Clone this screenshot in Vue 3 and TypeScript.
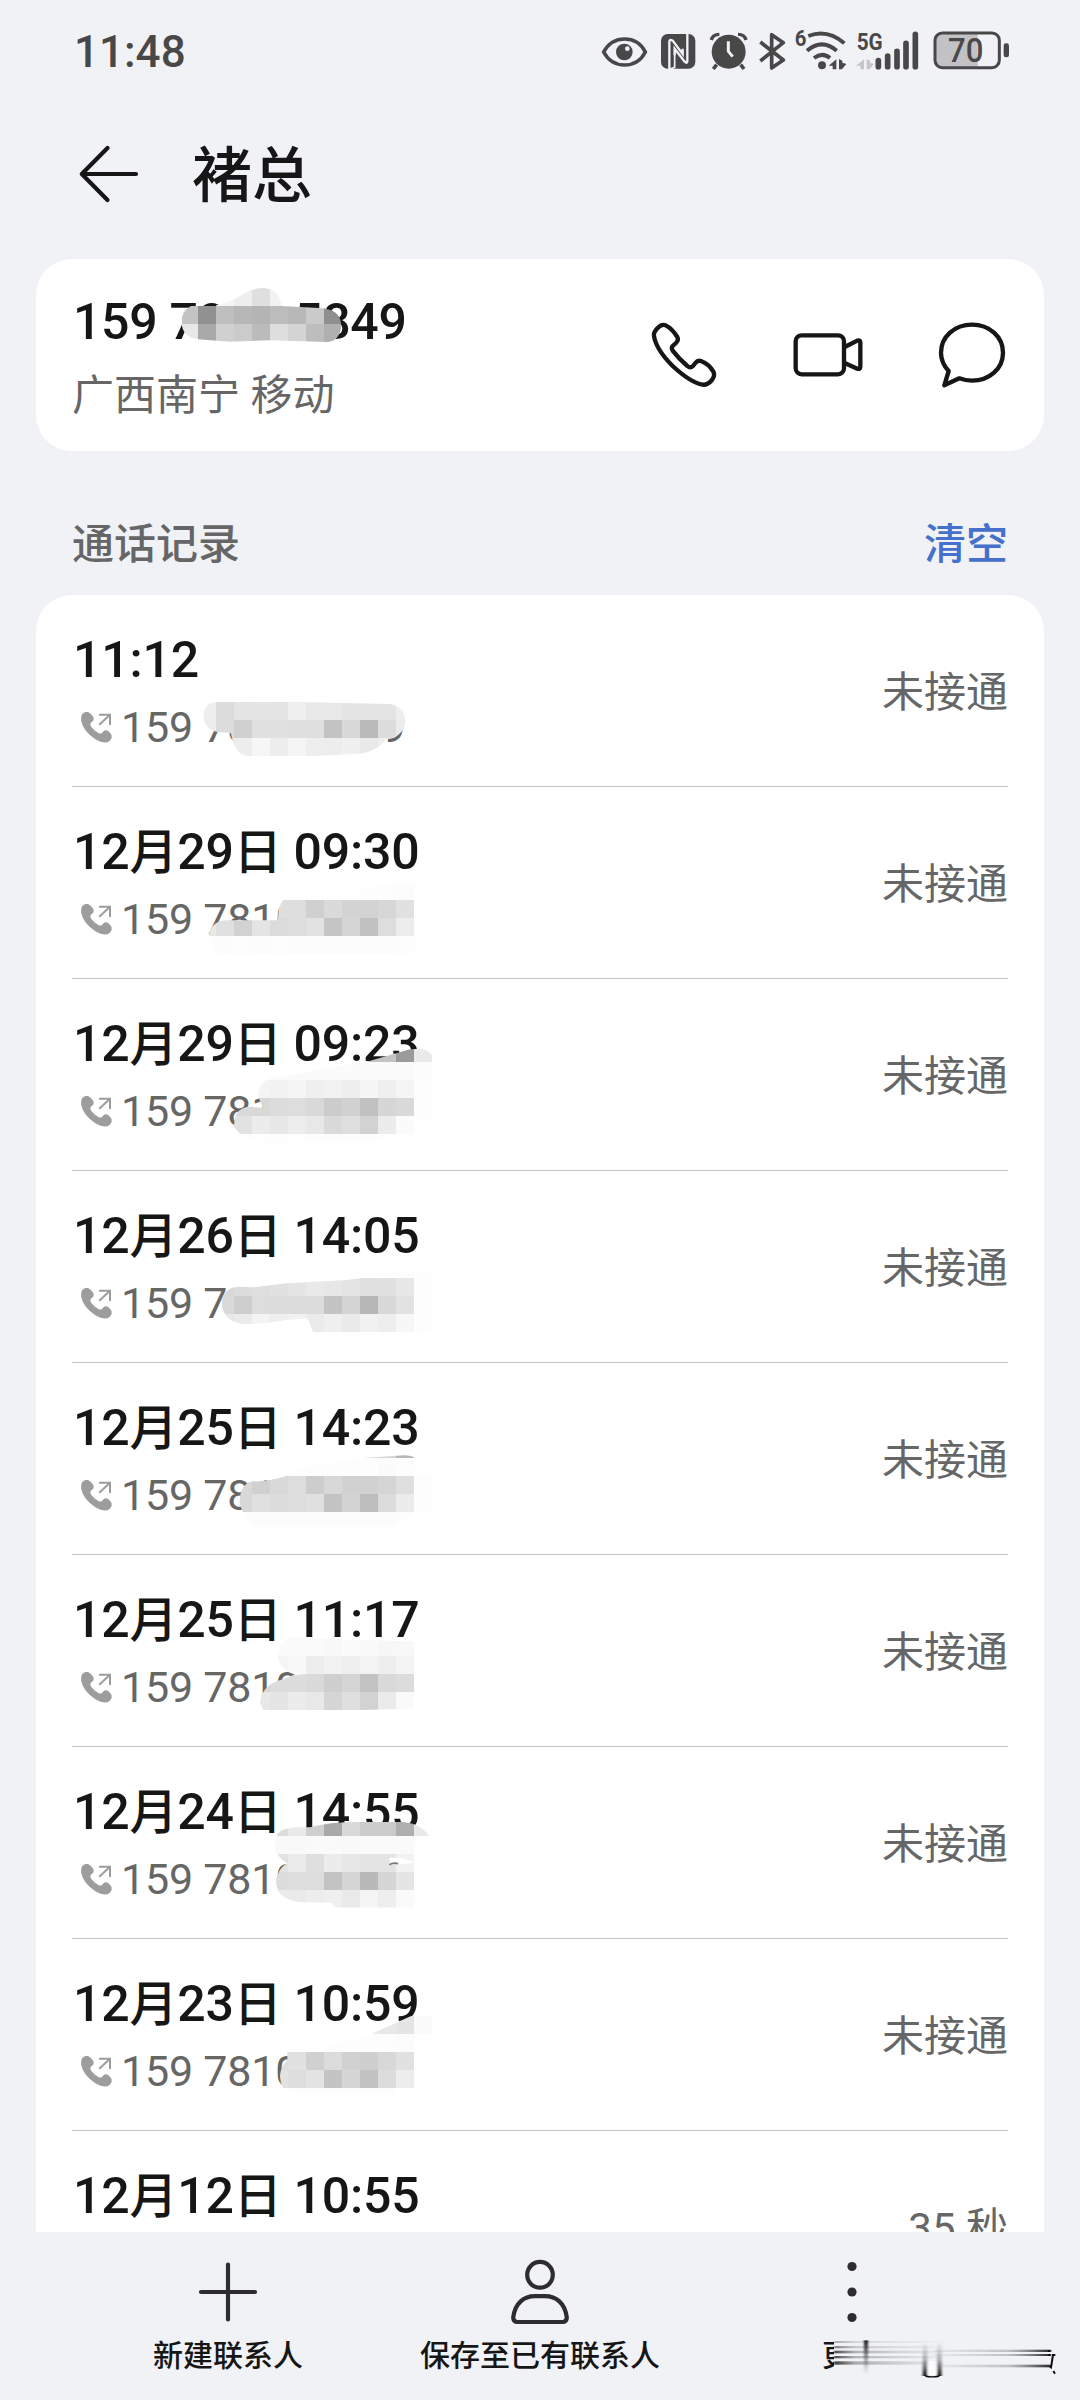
<script setup lang="ts">
interface Strip {
  x: number
  y: number
  tones: string
}

interface Mosaic {
  origin: number
  outline: string
  strips: Strip[]
}

interface CallRecord {
  month?: string
  day?: string
  time: string
  phone: string
  status: string
  mosaic?: Mosaic
}

const CELL = 54
const LIST_TOP = 595
const ROW = 192

const shade = (tone: string): string => `#${tone}${tone}${tone}`
const cells = (strip: Strip) =>
  strip.tones.split(' ').map((tone, i) => ({ x: strip.x + i * CELL, y: strip.y, fill: shade(tone) }))
const viewBox = (top: number, origin: number): string => `0 ${(top - origin) * 3} 1500 576`

const contactMosaic: Mosaic = {
  origin: 250,
  outline:
    'M455 215C455 180 480 163 510 163L560 166Q600 158 640 132Q668 114 700 114Q750 118 754 168L880 175C920 180 934 202 934 230C930 258 915 276 890 276L720 271L600 275L505 268C470 262 455 245 455 215Z',
  strips: [
    { x: 558, y: 114, tones: 'f4 ee df f2' },
    { x: 450, y: 168, tones: 'c4 91 bf b7 b4 bc b8 ca 8f' },
    { x: 450, y: 222, tones: 'e8 a9 d0 cb bb de d4 bd b0' },
  ],
}

const phone = '159 7810 5849'
const calls: CallRecord[] = [
  {
    time: '11:12', phone, status: '未接通',
    mosaic: {
      origin: 500,
      outline: 'M520 648Q522 606 560 606L800 606L1080 612Q1122 620 1127 662Q1124 700 1088 714L1070 716Q1040 756 980 762L850 768L650 768Q612 760 603 700Q590 697 570 697Q524 692 520 648Z',
      strips: [
        { x: 504, y: 606, tones: 'ee dc e4 e5 e4 ef e8 e8 e5 e5 e4 ee' },
        { x: 504, y: 660, tones: 'ec dc d0 e0 e0 df df c3 d8 ba dc ec' },
        { x: 558, y: 714, tones: 'e4 ed f6 ed f5 ee ed f0 e9 ef' },
      ],
    },
  },
  {
    month: '12', day: '29', time: '09:30', phone, status: '未接通',
    mosaic: {
      origin: 800,
      outline: 'M536 408Q545 362 590 361L744 361Q744 316 760 300L880 300L1050 255L1350 240L1340 400L1300 450L1100 464L570 464Q545 450 536 408Z',
      strips: [
        { x: 882, y: 246, tones: 'fe fe fd fd fc fe fe fe fe' },
        { x: 720, y: 300, tones: 'df dd d0 da d3 d3 d7 e1 fe fe fe fe' },
        { x: 504, y: 354, tones: 'e8 e0 d2 e4 dc dd e2 c5 d5 c1 dd ed fe fe fe fe' },
        { x: 504, y: 408, tones: 'fd fc fd fc fd fc fc fc fc fc fc fd fe fe fe fe' },
      ],
    },
  },
  {
    month: '12', day: '29', time: '09:23', phone, status: '未接通',
    mosaic: {
      origin: 800,
      outline: 'M1000 788L1140 748Q1190 742 1206 764L1206 860L1420 860L1410 960L1100 1020L680 1030Q630 1010 612 980Q612 925 655 920L700 924Q684 895 684 880Q688 850 720 834L1000 786Z',
      strips: [
        { x: 990, y: 732, tones: 'c4 c4 9b ea' },
        { x: 666, y: 786, tones: 'fb fb fa fa fb fb fb fb fa fc fe' },
        { x: 666, y: 840, tones: 'f4 f2 f5 ef f2 ee f5 ef f5 fd fe fe' },
        { x: 612, y: 894, tones: 'd9 d8 dc dd d9 cc d1 c1 d6 d9 fd fe fe fe' },
        { x: 612, y: 948, tones: 'e2 ec e7 ed e8 da df d2 ec fb fe fe' },
        { x: 612, y: 1002, tones: 'fd fe fd fe fd fd fd fd fe fe' },
      ],
    },
  },
  {
    month: '12', day: '26', time: '14:05', phone, status: '未接通',
    mosaic: {
      origin: 1190,
      outline: 'M575 340Q580 292 625 290L670 292L770 280L940 271L1000 264L1100 244L1250 240L1240 390L1180 432L850 427L832 385Q760 390 715 399L640 403Q580 395 575 340Z',
      strips: [
        { x: 1044, y: 210, tones: 'fe fd fe fe' },
        { x: 558, y: 264, tones: 'd8 dc df e1 e5 e9 e7 e4 e0 e1 e7 fd fe' },
        { x: 558, y: 318, tones: 'd9 ce dd dc dc dc c3 d4 b7 d8 e2 fd fe' },
        { x: 558, y: 372, tones: 'e7 eb f4 ee f2 eb ef ea f1 ee f7 fd fe' },
        { x: 828, y: 426, tones: 'fd fd fd fd fd fe fe' },
      ],
    },
  },
  {
    month: '12', day: '25', time: '14:23', phone, status: '未接通',
    mosaic: {
      origin: 1190,
      outline: 'M628 935Q632 878 670 874Q710 876 770 858L800 835L1010 803L1100 797Q1140 792 1156 803L1160 850L1440 850L1420 950L1160 966L1100 1010L680 1010Q640 990 628 935Z',
      strips: [
        { x: 990, y: 750, tones: 'd8 d4 b8' },
        { x: 774, y: 804, tones: 'fd fd fd fd fd fb fd fe' },
        { x: 612, y: 858, tones: 'd8 d0 d9 dd cd d8 d1 d1 d5 df fd fe fe fe fe' },
        { x: 612, y: 912, tones: 'd8 e0 dc dd e0 c3 d3 be dc ec fd fe fe fe fe' },
        { x: 612, y: 966, tones: 'fd fc fc fc fc fc fc fc fc fd' },
      ],
    },
  },
  {
    month: '12', day: '25', time: '11:17', phone, status: '未接通',
    mosaic: {
      origin: 1570,
      outline: 'M690 400Q692 345 760 327L790 315L830 312L790 312Q744 295 744 255Q755 200 800 202L850 205L1200 216L1210 290L1400 276L1370 380L1150 416L900 422L700 420Z',
      strips: [
        { x: 720, y: 204, tones: 'fa fa fa f8 fb f9 f7 f8 fe fe' },
        { x: 720, y: 258, tones: 'f5 f8 ed f2 ef f3 ee f4 fe fe fe fe' },
        { x: 666, y: 312, tones: 'd8 dc dc da cf d5 c3 d9 dc fe fe fe' },
        { x: 666, y: 366, tones: 'e8 e5 ec e8 d5 df d2 eb fa' },
      ],
    },
  },
  {
    month: '12', day: '24', time: '14:55', phone, status: '未接通',
    mosaic: {
      origin: 1570,
      outline: 'M740 796Q750 775 800 772L840 772Q900 755 1000 756L1120 756Q1175 762 1196 797L1210 850L1400 860L1390 930L1210 960L1150 1013L920 1013L905 998L830 997Q740 995 738 935Q742 896 772 880Q748 866 734 840Z',
      strips: [
        { x: 720, y: 744, tones: 'dc ea cf a9 d9 cc cb af e9' },
        { x: 720, y: 798, tones: 'f9 f9 fa fa f9 fa fa fa fe' },
        { x: 720, y: 852, tones: 'e2 eb df ec e7 e5 e4 f2 fe fe fe fe' },
        { x: 720, y: 906, tones: 'dc dd dd c3 d6 b9 d5 e5 fe fe fe fe' },
        { x: 720, y: 960, tones: 'eb ea ed ef ea f5 ee fa fe' },
      ],
    },
  },
  {
    month: '12', day: '23', time: '10:59', phone, status: '未接通',
    mosaic: {
      origin: 1950,
      outline: 'M1025 251L1150 195L1206 190L1206 296L1440 296L1420 400L1160 414L1080 430L820 430L760 414Q735 370 772 330L772 306L900 290L1025 252Z',
      strips: [
        { x: 990, y: 198, tones: 'ed e8 e5 fb' },
        { x: 882, y: 252, tones: 'fc fd fd fd fc fe' },
        { x: 720, y: 306, tones: 'df e1 d0 dc d1 cf d8 e1 fe fe fe fe' },
        { x: 720, y: 360, tones: 'e2 dd e3 c4 d6 c2 dc ed fe fe fe fe' },
        { x: 720, y: 414, tones: 'fd fd fd fc fc fd fd' },
      ],
    },
  },
  { month: '12', day: '12', time: '10:55', phone, status: '35 秒' },
]
</script>

<template>
  <main class="screen">
    <header class="status">
      <span class="clock">11:48</span>
      <div class="status-icons">
        <svg width="54" height="40" viewBox="60 60 162 120">
          <path d="M71 126Q92 87 134 87Q176 87 196 126Q176 165 134 165Q92 165 71 126Z" fill="none" stroke="#484848" stroke-width="11" />
          <circle cx="133" cy="126" r="25" fill="#484848" />
          <circle cx="142" cy="116" r="7" fill="#f1f2f6" />
        </svg>
        <svg width="50" height="40" viewBox="222 60 150 120">
          <rect x="243" y="72" width="103" height="104" rx="20" fill="#484848" />
          <path d="M268 178V96Q268 86 278 92L308 132V116M322 70V154Q322 162 314 155L284 116V136" fill="none" stroke="#f1f2f6" stroke-width="7" />
          <path d="M284 116V172L268 178" fill="none" stroke="#f1f2f6" stroke-width="5" />
        </svg>
        <svg width="50" height="40" viewBox="372 60 150 120">
          <circle cx="446" cy="125" r="51" fill="#484848" />
          <path d="M394 90Q398 73 418 73M498 90Q494 73 474 73" fill="none" stroke="#484848" stroke-width="10" />
          <path d="M410 164L400 177M482 164L492 177" stroke="#484848" stroke-width="11" />
          <path d="M445 94V124L458 140" fill="none" stroke="#f1f2f6" stroke-width="9" />
        </svg>
        <svg width="36" height="40" viewBox="522 60 108 120">
          <path d="M541 96L610 150L575 174V74L610 98L541 153" fill="none" stroke="#484848" stroke-width="11" stroke-linejoin="round" />
        </svg>
        <svg width="62" height="40" viewBox="630 60 186 120">
          <text x="644" y="109" font-size="66" font-weight="700" textLength="35" lengthAdjust="spacingAndGlyphs" fill="#484848">6</text>
          <path d="M685 78Q742 56 793 100M681 122Q726 84 770 122M702 144Q727 125 750 144" fill="none" stroke="#484848" stroke-width="12" />
          <circle cx="726" cy="166" r="12" fill="#484848" />
          <path d="M769 148V178H758V167H746ZM777 147V178H786L799 162L787 158V152Z" fill="#484848" />
        </svg>
        <svg width="74" height="40" viewBox="816 60 222 120">
          <text x="830" y="120" font-size="73" font-weight="700" textLength="78" lengthAdjust="spacingAndGlyphs" fill="#484848">5G</text>
          <path d="M852 148V178H841V167H828ZM860 147V178H869L881 162L870 158V152Z" fill="#c6c6c8" />
          <path d="M895 152V170M923 138V170M951 124V170M978 100V170M1006 73V170" stroke="#484848" stroke-width="17" stroke-linecap="round" />
        </svg>
        <svg width="84" height="40" viewBox="1038 60 252 120">
          <path d="M1086 70H1193V172H1086Q1066 172 1066 150V92Q1066 70 1086 70Z" fill="#c2c2c4" />
          <rect x="1065" y="69" width="193" height="104" rx="22" fill="none" stroke="#484848" stroke-width="9" />
          <rect x="1271" y="100" width="16" height="42" rx="7" fill="#484848" />
          <text x="1104" y="157" font-size="102" font-weight="500" textLength="106" lengthAdjust="spacingAndGlyphs" fill="#484848">70</text>
        </svg>
      </div>
    </header>

    <nav class="title-bar">
      <svg width="72" height="72" viewBox="0 0 72 72" class="line-icon">
        <path d="M35.500 10L9.800 36L35.500 62M9.800 36H64" />
      </svg>
      <h1>褚总</h1>
    </nav>

    <section class="card contact">
      <div class="contact-info">
        <p class="number">{{ phone }}</p>
        <p class="region">广西南宁 移动</p>
      </div>
      <div class="actions">
        <svg width="72" height="72" viewBox="84 84 216 216">
          <path d="M102 138Q100 128 112 115Q124 101 137 106Q156 115 172 141Q177 150 168 159L158 168Q153 174 158 182Q178 208 202 228Q211 236 219 228L226 219Q233 210 243 213Q267 222 280 245Q286 256 276 270Q262 286 248 284Q212 278 158 228Q108 178 102 138Z" />
        </svg>
        <svg width="72" height="72" viewBox="516 84 216 216">
          <rect x="527" y="136" width="145" height="117" rx="18" />
          <path d="M674 171L712 152Q721 149 721 158V230Q721 239 712 236L674 219" />
        </svg>
        <svg width="72" height="72" viewBox="948 84 216 216">
          <path d="M986 243Q963 218 963 188C963 140 1004 104 1056 104S1149 140 1149 188S1108 272 1056 272Q1036 272 1018 265L973 286Z" />
        </svg>
      </div>
      <svg class="mosaic" width="500" height="192" :viewBox="viewBox(259, contactMosaic.origin)">
        <clipPath id="contact-clip"><path :d="contactMosaic.outline" /></clipPath>
        <g clip-path="url(#contact-clip)" shape-rendering="crispEdges">
          <template v-for="strip in contactMosaic.strips" :key="strip.y">
            <rect v-for="c in cells(strip)" :key="c.x" :x="c.x" :y="c.y" width="54" height="54" :fill="c.fill" />
          </template>
        </g>
      </svg>
    </section>

    <div class="section-head">
      <h2>通话记录</h2>
      <a>清空</a>
    </div>

    <section class="card list">
      <article v-for="(call, i) in calls" :key="i" class="row">
        <div class="record">
          <div class="entry">
            <p class="when">
              <template v-if="call.month">{{ call.month }}<span class="han">月</span>{{ call.day }}<span class="han day">日</span></template>{{ call.time }}
            </p>
            <p class="phone">
              <svg width="36" height="36" viewBox="144 624 108 108">
                <path d="M156 640Q168 626 182 638L190 648Q194 658 184 664Q178 669 184 678Q196 692 207 697Q214 700 219 692Q225 684 235 690L243 699Q249 710 238 721Q226 730 200 717Q154 688 153 650Z" fill="#9d9d9d" />
                <path d="M207 641H240V672M239 642L208 671" fill="none" stroke="#9d9d9d" stroke-width="6" />
              </svg>
              <span>{{ call.phone }}</span>
            </p>
          </div>
          <span class="result">{{ call.status }}</span>
        </div>
        <svg v-if="call.mosaic" class="mosaic" width="500" height="192" :viewBox="viewBox(LIST_TOP + i * ROW, call.mosaic.origin)">
          <clipPath :id="`clip-${i}`"><path :d="call.mosaic.outline" /></clipPath>
          <g :clip-path="`url(#clip-${i})`" shape-rendering="crispEdges">
            <template v-for="strip in call.mosaic.strips" :key="strip.y">
              <rect v-for="c in cells(strip)" :key="c.x" :x="c.x" :y="c.y" width="54" height="54" :fill="c.fill" />
            </template>
          </g>
          <g v-if="i === 6">
            <path d="M1078 864Q1120 860 1152 878L1120 882L1080 880Z" fill="#fff" />
            <path d="M1078 884Q1090 877 1104 881" fill="none" stroke="#777" stroke-width="5" />
          </g>
        </svg>
      </article>
    </section>

    <footer class="toolbar">
      <div class="tool">
        <svg width="72" height="72" viewBox="0 0 72 72" class="tool-icon"><path d="M36 8.500V63.500M9 36H63" /></svg>
        <span>新建联系人</span>
      </div>
      <div class="tool">
        <svg width="72" height="72" viewBox="0 0 72 72" class="tool-icon">
          <ellipse cx="36" cy="18.800" rx="12.800" ry="12.900" />
          <path d="M9.200 61.500C11 47 20 40.200 31 40.200H41C52 40.200 61 47 62.800 61.500Q62.800 66 58.500 66H13.500Q9.200 66 9.200 61.500Z" />
        </svg>
        <span>保存至已有联系人</span>
      </div>
      <div class="tool more">
        <svg width="72" height="72" viewBox="0 0 72 72" fill="#2d2d2f">
          <circle cx="36" cy="10.500" r="4.600" /><circle cx="36" cy="36" r="4.600" /><circle cx="36" cy="61.500" r="4.600" />
        </svg>
        <span class="cut">更</span>
        <svg class="smear" width="240" height="50" viewBox="372 500 720 150">
          <defs>
            <linearGradient id="fade-left"><stop offset="0" stop-color="#111" stop-opacity=".85" /><stop offset=".2" stop-color="#444" stop-opacity=".4" /><stop offset="1" stop-color="#777" stop-opacity=".06" /></linearGradient>
            <linearGradient id="fade-right"><stop offset="0" stop-color="#777" stop-opacity=".08" /><stop offset=".65" stop-color="#555" stop-opacity=".32" /><stop offset="1" stop-color="#111" stop-opacity=".9" /></linearGradient>
            <linearGradient id="fade-down" x2="0" y2="1"><stop offset="0" stop-color="#777" stop-opacity="0" /><stop offset=".5" stop-color="#666" stop-opacity=".45" /><stop offset="1" stop-color="#111" /></linearGradient>
            <linearGradient id="fade-up" x2="0" y2="1"><stop offset="0" stop-color="#111" /><stop offset="1" stop-color="#777" stop-opacity="0" /></linearGradient>
            <filter id="soft" x="-20%" y="-40%" width="140%" height="180%"><feGaussianBlur stdDeviation="2.500 2" /></filter>
          </defs>
          <g filter="url(#soft)">
            <g fill="url(#fade-left)">
              <rect x="402" y="515" width="330" height="6" opacity=".4" /><rect x="402" y="530" width="330" height="7" opacity=".6" />
              <rect x="402" y="544" width="330" height="8" opacity=".9" /><rect x="402" y="560" width="330" height="7" opacity=".9" /><rect x="402" y="576" width="330" height="10" />
            </g>
            <g fill="url(#fade-right)">
              <rect x="700" y="541" width="352" height="7" /><rect x="700" y="554" width="352" height="6" /><rect x="700" y="586" width="352" height="8" />
            </g>
            <rect x="668" y="518" width="14" height="102" fill="url(#fade-down)" /><rect x="711" y="518" width="14" height="102" fill="url(#fade-down)" />
            <rect x="684" y="575" width="25" height="42" fill="#fff" opacity=".8" />
            <rect x="492" y="513" width="12" height="104" fill="url(#fade-up)" />
          </g>
          <path d="M676 621Q697 624 718 621" fill="none" stroke="#050505" stroke-width="4" />
          <path d="M1044 545H1052M1044 557H1052M1066 557H1059L1053 594L1048 590M1060 605L1065 613" fill="none" stroke="#111" stroke-width="6" />
        </svg>
      </div>
    </footer>
  </main>
</template>

<style>
body {
  margin: 0;
  background: #f1f2f6;
}
</style>

<style scoped>
.screen {
  display: flex;
  flex-direction: column;
  width: 1080px;
  height: 2400px;
  overflow: hidden;
  background: #f1f2f6;
  color: #161616;
  font-family: Roboto, "Noto Sans CJK SC", sans-serif;
}

svg {
  display: block;
  flex: none;
}

p,
h1,
h2 {
  margin: 0;
  white-space: nowrap;
}

.status {
  display: flex;
  flex: none;
  justify-content: space-between;
  align-items: center;
  height: 40px;
  padding: 30px 70px 0 74px;
}

.status-icons svg {
  overflow: visible;
}

.clock {
  padding-top: 3px;
  color: #484848;
  font-size: 44px;
  font-weight: 500;
  line-height: 40px;
}

.status-icons {
  display: flex;
}

.title-bar {
  display: flex;
  flex: none;
  align-items: center;
  gap: 48px;
  height: 72px;
  padding: 68px 72px 49px;
}

.title-bar h1 {
  padding-top: 5px;
  font-size: 60px;
  font-weight: 500;
  line-height: 72px;
}

.line-icon,
.tool-icon {
  fill: none;
  stroke: #161616;
  stroke-width: 4.200;
  stroke-linecap: round;
  stroke-linejoin: round;
}

.tool-icon {
  stroke: #2d2d2f;
}

.card {
  position: relative;
  flex: none;
  margin: 0 36px;
  border-radius: 36px;
  background: #fff;
}

.contact {
  display: flex;
  justify-content: space-between;
  box-sizing: border-box;
  height: 192px;
  padding: 31px 36px 0;
}

.number {
  padding-left: 1px;
  font-size: 50px;
  font-weight: 500;
  line-height: 64px;
  letter-spacing: -0.3px;
}

.region {
  margin-top: 14px;
  color: #666;
  font-size: 42px;
  line-height: 56px;
}

.actions {
  display: flex;
  gap: 72px;
  padding-top: 28px;
}

.actions svg {
  fill: none;
  stroke: #161616;
  stroke-width: 13;
  stroke-linejoin: round;
}

.mosaic {
  position: absolute;
  top: 0;
  left: -6px;
}

.section-head {
  display: flex;
  flex: none;
  justify-content: space-between;
  align-items: center;
  height: 64px;
  padding: 62px 72px 18px;
}

.section-head h2,
.section-head a {
  font-size: 42px;
  font-weight: 500;
  line-height: 64px;
}

.section-head h2 {
  color: #666;
}

.section-head a {
  color: #4570cb;
}

.list {
  flex: none;
  height: 1637px;
  overflow: hidden;
  border-radius: 36px 36px 0 0;
}

.row {
  position: relative;
  height: 192px;
}

.record {
  display: flex;
  justify-content: space-between;
  align-items: center;
  box-sizing: border-box;
  height: 192px;
  margin: 0 36px;
  border-bottom: 1px solid #c4c4c4;
}

.entry {
  display: flex;
  flex-direction: column;
  gap: 7px;
  padding-top: 1px;
}

.when {
  height: 64px;
  padding-left: 1px;
  font-size: 50px;
  font-weight: 500;
  line-height: 64px;
  letter-spacing: -0.2px;
}

.han {
  font-size: 48px;
}

.day {
  margin-right: 12px;
}

.phone {
  display: flex;
  align-items: center;
  gap: 7px;
  height: 56px;
  padding-left: 6px;
  color: #666;
  font-size: 43px;
  line-height: 56px;
  letter-spacing: -0.2px;
}

.result {
  padding-top: 4px;
  color: #666;
  font-size: 42px;
  line-height: 56px;
}

.toolbar {
  display: flex;
  flex: none;
  height: 144px;
  padding: 24px 72px 0;
  box-sizing: content-box;
}

.tool {
  position: relative;
  display: flex;
  flex: 1;
  flex-direction: column;
  align-items: center;
  gap: 8px;
}

.tool span {
  font-size: 30px;
  font-weight: 500;
  line-height: 40px;
}

.more .cut {
  align-self: flex-start;
  width: 12px;
  margin-left: 126px;
  overflow: hidden;
}

.smear {
  position: absolute;
  top: 80px;
  left: 128px;
}
</style>
